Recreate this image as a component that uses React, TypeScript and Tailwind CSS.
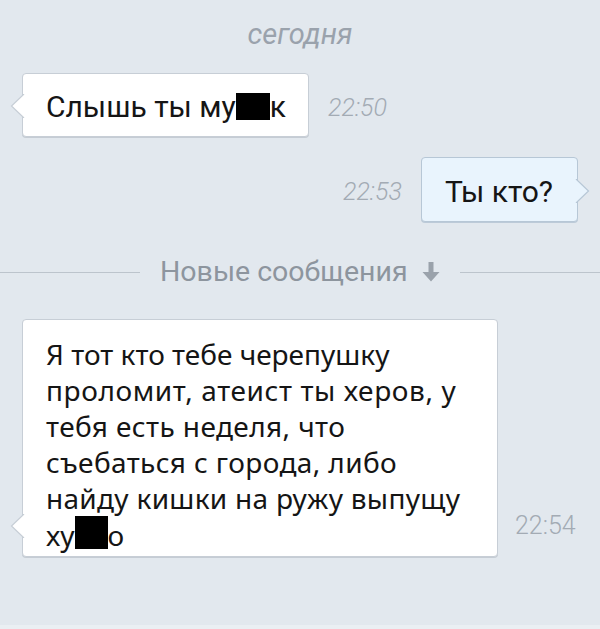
import React from 'react';

const Tail = ({ side, fill, stroke }: { side: 'left' | 'right'; fill: string; stroke: string }) => {
  const left = side === 'left';
  return (
    <svg
      width="15"
      height="24"
      viewBox="0 0 15 24"
      className={`absolute bottom-[18px] ${left ? '-left-[13px]' : '-right-[13px] -scale-x-100'}`}
    >
      <path d="M15 0 L14 0 L1.5 12 L14 24 L15 24 Z" fill={fill} />
      <path d="M14 0 L1.5 12 L14 24" fill="none" stroke={stroke} strokeWidth="1.2" />
    </svg>
  );
};

const Censor = ({ w, h }: { w: string; h: string }) => (
  <span className={`inline-block bg-black align-[-3px] ${w} ${h}`} />
);

export default function App() {
  return (
    <div className="w-[600px] h-[629px] overflow-hidden bg-[#e2e8ee] font-['Roboto',sans-serif] flex flex-col">
      <div className="pt-[16px] text-center italic text-[29px] leading-[36px] text-[#9aa2ac]">сегодня</div>

      {/* incoming */}
      <div className="mt-[21px] flex items-center gap-[19px] pl-[22px]">
        <div className="relative h-[64px] w-[287px] flex items-center pl-[23px] pt-[4px] bg-white border border-[#c7ced6] rounded-[4px] shadow-[0_1px_0_#c5ccd4]">
          <Tail side="left" fill="#ffffff" stroke="#c7ced6" />
          <span className="text-[30px] leading-[36px] text-[#151515] whitespace-nowrap">
            Слышь ты му<Censor w="w-[34px]" h="h-[27px]" />к
          </span>
        </div>
        <span className="italic font-light text-[25px] text-[#a3abb4] pt-[6px]">22:50</span>
      </div>

      {/* outgoing */}
      <div className="mt-[20px] flex items-center justify-end gap-[19px] pr-[22px]">
        <span className="italic font-light text-[25px] text-[#a3abb4] pt-[4px]">22:53</span>
        <div className="relative h-[65px] w-[157px] flex items-center pl-[23px] pt-[4px] bg-[#e9f4fd] border border-[#b7c7d6] rounded-[4px] shadow-[0_1px_0_#bccad8]">
          <Tail side="right" fill="#e9f4fd" stroke="#b7c7d6" />
          <span className="text-[30px] leading-[36px] text-[#151515]">Ты кто?</span>
        </div>
      </div>

      {/* new messages divider */}
      <div className="mt-[34px] flex items-center h-[32px]">
        <div className="w-[140px] h-px bg-[#bcc4cc]" />
        <span className="ml-[20px] text-[28.5px] text-[#8d959e] leading-[32px]">Новые сообщения</span>
        <svg width="18" height="22" viewBox="0 0 18 22" className="ml-[14px]">
          <path d="M6.5 1 H11.5 V11 H17.5 L9 20.5 L0.5 11 H6.5 Z" fill="#9aa2ab" />
        </svg>
        <div className="ml-[20px] flex-1 h-px bg-[#bcc4cc]" />
      </div>

      {/* long incoming */}
      <div className="mt-[31px] flex items-end gap-[17px] pl-[22px]">
        <div className="relative w-[476px] h-[238px] pl-[23px] pt-[16px] bg-white border border-[#c7ced6] rounded-[4px] shadow-[0_1px_0_#c5ccd4]">
          <Tail side="left" fill="#ffffff" stroke="#c7ced6" />
          <p className="font-['Noto_Sans',sans-serif] text-[28px] leading-[36px] text-[#151515] whitespace-nowrap">
            Я тот кто тебе черепушку
            <br />
            <span className="tracking-[0.6px]">проломит, атеист ты херов, у</span>
            <br />
            <span className="tracking-[0.4px]">тебя есть неделя, что</span>
            <br />
            <span className="tracking-[0.4px]">съебаться с города, либо</span>
            <br />
            <span className="tracking-[0.3px]">найду кишки на ружу выпущу</span>
            <br />
            ху<Censor w="w-[33px]" h="h-[33px]" />о
          </p>
        </div>
        <span className="mb-[13px] font-light text-[25px] text-[#a3abb4]">22:54</span>
      </div>

      <div className="mt-auto h-[4px] bg-[#eaeff3]" />
    </div>
  );
}
